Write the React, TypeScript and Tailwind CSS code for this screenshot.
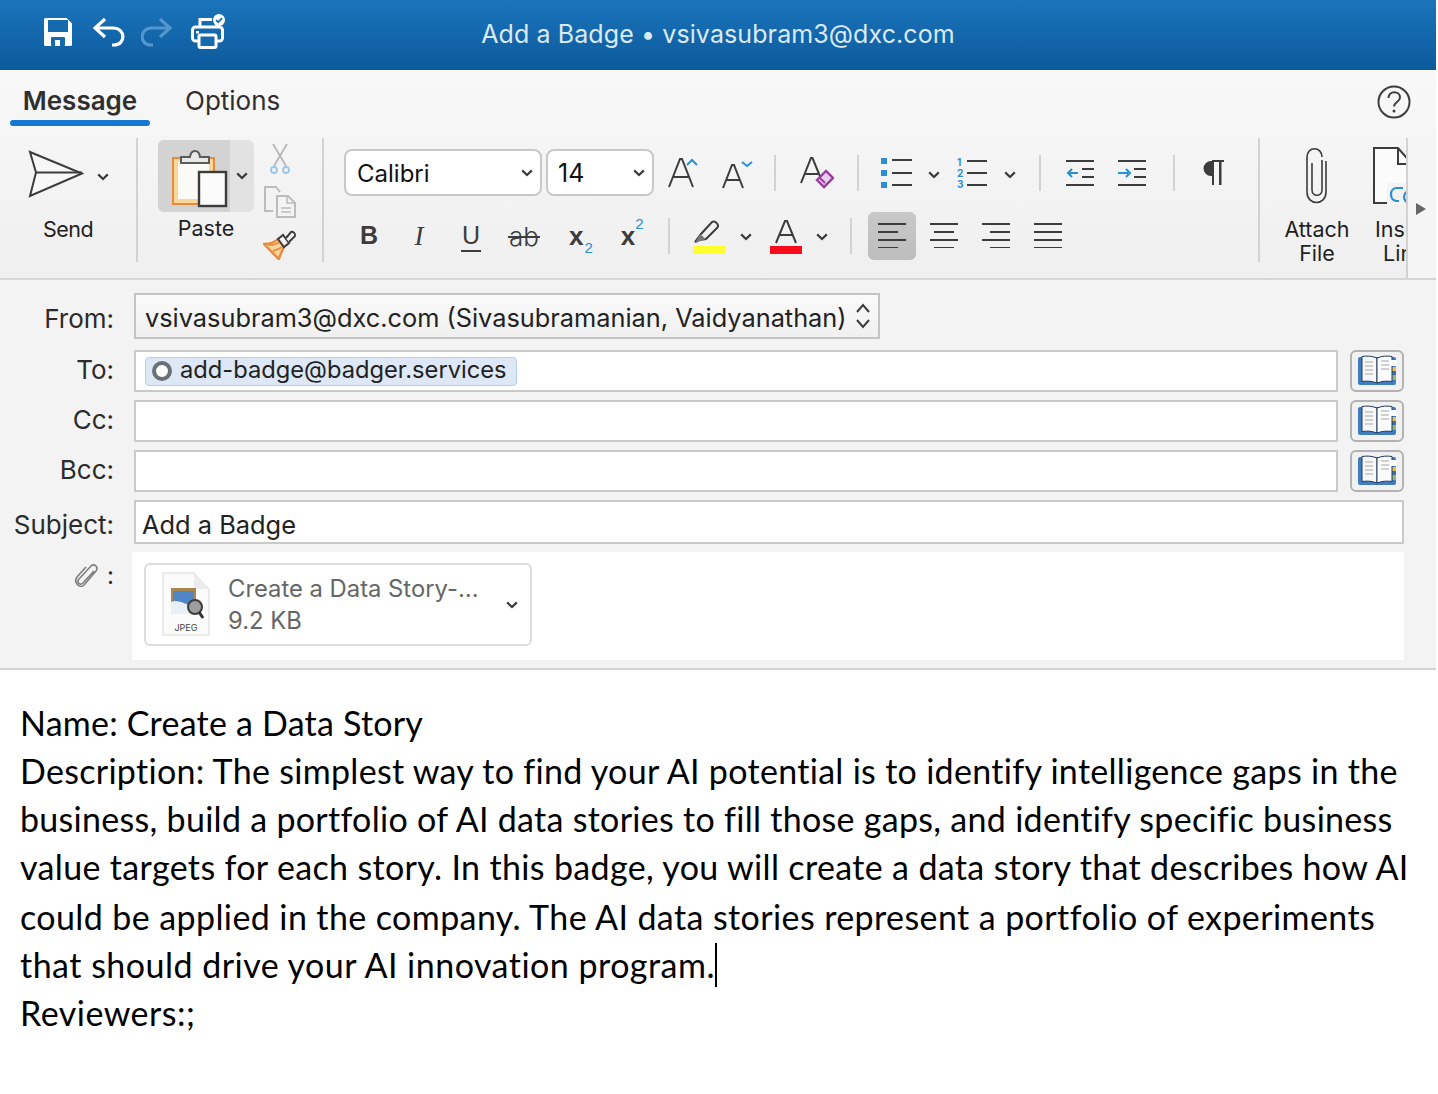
import React from 'react';

const ui = "font-['Inter','Noto_Sans',sans-serif]";

const Chevron = ({ className = '' }: { className?: string }) => (
  <svg width="12" height="8" viewBox="0 0 12 8" className={`shrink-0 ${className}`}>
    <path d="M1.2 1.4 6 6 10.8 1.4" fill="none" stroke="#3a3a3a" strokeWidth="2.2" />
  </svg>
);

const Sep = ({ className = 'h-9' }: { className?: string }) => <div className={`w-0.5 bg-[#d2d2d2] shrink-0 ${className}`} />;

const Lines = ({ rows, w = 28 }: { rows: [number, number][]; w?: number }) => (
  <svg width={w} height="26" viewBox={`0 0 ${w} 26`} className="relative -top-px">
    {rows.map(([a, b], i) => (
      <rect key={i} x={a} y={1 + i * 8} width={b - a} height="2" fill="#3c3c3c" />
    ))}
  </svg>
);

const BookIcon = () => (
  <svg width="40" height="32" viewBox="0 0 40 32">
    <rect x="1" y="2" width="38" height="28" rx="2" fill="#3f7cc0" />
    <rect x="34" y="12" width="5" height="4" fill="#e9bf4e" />
    <rect x="34" y="16" width="5" height="4" fill="#3b6ea8" />
    <rect x="34" y="20" width="5" height="5" fill="#8fb577" />
    <path d="M5 1.5c5-.8 10-.5 15 1.5v25c-5-2-10-2.2-15-1.5Z" fill="#f6f6f6" stroke="#1f3b5e" />
    <path d="M35 1.5c-5-.8-10-.5-15 1.5v25c5-2 10-2.2 15-1.5Z" fill="#fbfbfb" stroke="#1f3b5e" />
    <rect x="34" y="5" width="5.5" height="6" fill="#fff" />
    <path d="M8 7h8M8 11h8M8 15h8M8 19h8M24 6h8M24 10h8M24 14h8" stroke="#c2c2c2" strokeWidth="1.6" />
  </svg>
);

const BookButton = () => (
  <button className="w-[54px] h-[42px] rounded-md border-2 border-[#b2b2b2] bg-[#f1f1f1] flex items-center justify-center shrink-0">
    <BookIcon />
  </button>
);

const TitleBar = () => (
  <div className="h-[70px] bg-gradient-to-b from-[#1b74bb] to-[#0c5a9c] flex items-center relative">
    <div className="flex items-center pl-11 h-full pb-[6px]">
      <svg width="28" height="28" viewBox="0 0 28 28">
        <path d="M1.5 0h21L28 5.5v21a1.5 1.5 0 0 1-1.5 1.5h-25A1.5 1.5 0 0 1 0 26.5v-25A1.500 1.500 0 0 1 1.500 0Z" fill="#fff" />
        <rect x="4" y="2" width="20" height="12" fill="#1569ad" />
        <rect x="7" y="19" width="14" height="9" rx="1" fill="#1569ad" />
        <rect x="11" y="22" width="5" height="6" fill="#fff" />
      </svg>
      <svg width="32" height="30" viewBox="0 0 32 30" className="ml-[21px]">
        <path d="M12 2 2 11l10 9M3 11h17c13 0 13 17 1 17h-2" fill="none" stroke="#fff" strokeWidth="3.2" />
      </svg>
      <svg width="32" height="30" viewBox="0 0 32 30" className="ml-[16px] opacity-90">
        <path d="M19 2l10 9-10 9M28 11H11C-2 11-2 28 10 28h2" fill="none" stroke="#5a9ccf" strokeWidth="3.2" />
      </svg>
      <svg width="36" height="36" viewBox="0 0 36 36" className="ml-[18px] mb-[1px]">
        <path d="M9 14V5.500h12M26 10v4" fill="none" stroke="#fff" strokeWidth="3" />
        <rect x="1.500" y="13" width="30" height="14" rx="3" fill="none" stroke="#fff" strokeWidth="3" />
        <rect x="8" y="21" width="17" height="12.500" rx="1.500" fill="#1569ad" stroke="#fff" strokeWidth="3" />
        <rect x="5" y="17" width="3" height="2.500" fill="#fff" />
        <circle cx="28" cy="6" r="6" fill="#fff" />
        <path d="M25 6l2.200 2.200L31 4.200" fill="none" stroke="#1569ad" strokeWidth="1.700" />
      </svg>
    </div>
    <div className="absolute inset-0 flex items-center justify-center pb-[1px] text-[#dbe9f5] text-[25px] tracking-[0.1px]">
      Add a Badge • vsivasubram3@dxc.com
    </div>
  </div>
);

const Tabs = () => (
  <div className="h-[56px] flex items-start justify-between pr-[25px] text-[#2f2f2f]">
    <div className="flex">
      <div className="ml-[10px] w-[140px] h-[56px] flex flex-col items-center">
        <span className="mt-[14px] h-[34px] text-[26px] leading-[34px] font-semibold">Message</span>
        <div className="mt-[2px] w-full h-[6px] rounded-full bg-[#1477d2]" />
      </div>
      <span className="ml-[35px] mt-[14px] text-[26px] leading-[34px] font-normal">Options</span>
    </div>
    <svg width="34" height="34" viewBox="0 0 34 34" className="mt-[15px]">
      <circle cx="17" cy="17" r="15.500" fill="none" stroke="#3d3d3d" strokeWidth="2" />
      <path d="M11.500 13c.3-8 11.500-7.500 11.500-.5 0 4.500-6 4.500-6 9" fill="none" stroke="#3d3d3d" strokeWidth="2" />
      <circle cx="17" cy="26" r="1.500" fill="#3d3d3d" />
    </svg>
  </div>
);

const SendGroup = () => (
  <div className="w-[136px] shrink-0 flex flex-col">
    <div className="h-[56px] flex items-start pl-[28px] pt-[24px] mt-0">
      <svg width="56" height="48" viewBox="0 0 56 48">
        <path d="M2 2 54 23.500 2 46l6-23.500Z" fill="#f7f7f7" stroke="#3c3c3c" strokeWidth="2" />
        <path d="M8 22.500h46" stroke="#3c3c3c" strokeWidth="2" />
      </svg>
      <Chevron className="ml-[13px] mt-[23px]" />
    </div>
    <span className="mt-[33px] pl-[43px] text-[21.500px] leading-[28px] tracking-[-0.5px] text-[#1f1f1f]">Send</span>
  </div>
);

const PasteGroup = () => (
  <div className="w-[184px] shrink-0 flex pl-[20px] pt-[14px]">
    <div className="flex flex-col items-center w-[96px]">
      <div className="w-[96px] h-[72px] rounded-md flex bg-[#e2e2e2] overflow-hidden">
        <div className="w-[72px] bg-[#d3d3d3] flex items-start pl-[14px] pt-[8px]">
          <svg width="56" height="60" viewBox="0 0 56 60">
            <rect x="1" y="10" width="41" height="46" fill="#f9d899" stroke="#ea8a3c" strokeWidth="2" />
            <rect x="6" y="14" width="31" height="37" fill="#fbfaf6" />
            <path d="M9 15V9h9c1-8 9-8 10 0h9v6Z" fill="#e8e8e8" stroke="#5b5b5b" strokeWidth="2" />
            <rect x="27" y="24" width="27" height="34" fill="#fbfbfb" stroke="#3c3c3c" strokeWidth="2.400" />
          </svg>
        </div>
        <div className="flex-1 flex items-center justify-center">
          <Chevron />
        </div>
      </div>
      <span className="mt-[2px] text-[21.500px] leading-[28px] text-[#1f1f1f]">Paste</span>
    </div>
    <div className="flex flex-col items-center ml-[7px] w-[38px] mt-[3px]">
      <svg width="24" height="32" viewBox="0 0 24 32">
        <path d="M5 1l13 22M19 1 6 23" stroke="#b8b8b8" strokeWidth="1.800" fill="none" />
        <circle cx="6" cy="27" r="3" fill="none" stroke="#9cc6e6" strokeWidth="1.800" />
        <circle cx="18" cy="27" r="3" fill="none" stroke="#9cc6e6" strokeWidth="1.800" />
      </svg>
      <svg width="34" height="34" viewBox="0 0 34 34" className="mt-[10px]">
        <path d="M10 26H2V2h11l4 5" fill="none" stroke="#bcbcbc" strokeWidth="2" />
        <path d="M14 11h11l7 7v14H14Z" fill="#f4f4f4" stroke="#bcbcbc" strokeWidth="2" />
        <path d="M24 11v7h8M18 23h10M18 27h10" fill="none" stroke="#bcbcbc" strokeWidth="1.600" />
      </svg>
      <svg width="34" height="30" viewBox="0 0 34 30" className="mt-[11px]">
        <path d="M1 14c6 0 11-2 14-5l6 8c-2 4-4 8-5 12C12 26 6 19 1 14Z" fill="#f9d49a" stroke="#ea8a3c" strokeWidth="2.400" />
        <path d="M5 15c5 0 9-1 12-3M10 21c3-1 6-2 9-4" fill="none" stroke="#ea8a3c" strokeWidth="1.600" />
        <path d="M15 9l5-4 6 8-5 4Z" fill="#f6f6f6" stroke="#3c3c3c" strokeWidth="2" />
        <path d="M23 8l5-6c2-1 5 2 4 4l-6 6" fill="#f6f6f6" stroke="#3c3c3c" strokeWidth="2" />
      </svg>
    </div>
  </div>
);

const Selects = () => (
  <div className="flex items-center gap-[4px] -mt-[1px]">
    <div className="w-[198px] h-[47px] rounded-lg border-2 border-[#c8c8c8] bg-white flex items-center justify-between pl-[11px] pr-[7px] text-[24px] text-[#111]">
      <span className="pt-[2px]">Calibri</span>
      <Chevron />
    </div>
    <div className="w-[108px] h-[47px] rounded-lg border-2 border-[#c8c8c8] bg-white flex items-center justify-between pl-[10px] pr-[7px] text-[25px] text-[#111]">
      <span className="pt-[2px]">14</span>
      <Chevron />
    </div>
  </div>
);

const FormatRowOne = () => (
  <div className="h-[48px] flex items-center mt-[23px]">
    <div className="ml-[20px]"><Selects /></div>
    <svg width="36" height="34" viewBox="0 0 36 34" className="ml-[13px]">
      <path d="M2 31 13 3h2l11 28M6 21h17" fill="none" stroke="#3c3c3c" strokeWidth="2" />
      <path d="M22 8l5-5 5 5" fill="none" stroke="#2a8fd3" strokeWidth="2" transform="translate(-2 1)" />
    </svg>
    <svg width="32" height="28" viewBox="0 0 32 28" className="ml-[19px] mt-[3px]">
      <path d="M1 27 10 4h2l9 23M4 19h14" fill="none" stroke="#3c3c3c" strokeWidth="2" />
      <path d="M20 1l5 4 5-4" fill="none" stroke="#2a8fd3" strokeWidth="2" />
    </svg>
    <Sep className="h-9 ml-[20px]" />
    <svg width="34" height="34" viewBox="0 0 34 34" className="ml-[24px]">
      <path d="M1 27 11 2h1.500l9 22M4 18h14" fill="none" stroke="#3c3c3c" strokeWidth="2" />
      <path d="M17 24l9-9 7 7-9 9Z" fill="#e9cfe9" stroke="#9b3aa3" strokeWidth="2.400" />
      <path d="M20 22l5 5" stroke="#9b3aa3" strokeWidth="2" />
    </svg>
    <Sep className="h-9 ml-[23px]" />
    <svg width="32" height="30" viewBox="0 0 32 30" className="ml-[22px]">
      <rect x="0" y="0" width="6" height="6" fill="#2a8fd3" />
      <rect x="0" y="12" width="6" height="6" fill="#2a8fd3" />
      <rect x="0" y="24" width="6" height="6" fill="#2a8fd3" />
      <path d="M11 2h20M11 15h20M11 27h20" stroke="#3c3c3c" strokeWidth="2" />
    </svg>
    <Chevron className="ml-[15px] mt-[3px]" />
    <svg width="32" height="32" viewBox="0 0 32 32" className="ml-[17px]">
      <text x="0" y="9" fontSize="10" fontWeight="700" fill="#2a8fd3" fontFamily="Inter">1</text>
      <text x="0" y="20" fontSize="10" fontWeight="700" fill="#2a8fd3" fontFamily="Inter">2</text>
      <text x="0" y="31" fontSize="10" fontWeight="700" fill="#2a8fd3" fontFamily="Inter">3</text>
      <path d="M10 4h20M10 16h20M10 28h20" stroke="#3c3c3c" strokeWidth="2" />
    </svg>
    <Chevron className="ml-[15px] mt-[3px]" />
    <Sep className="h-9 ml-[23px]" />
    <svg width="28" height="26" viewBox="0 0 28 26" className="ml-[25px]">
      <path d="M0 1h28M16 9h12M16 17h12M0 25h28" stroke="#3c3c3c" strokeWidth="2" />
      <path d="M12 13H2M6 9l-4 4 4 4" fill="none" stroke="#2a8fd3" strokeWidth="2" />
    </svg>
    <svg width="28" height="26" viewBox="0 0 28 26" className="ml-[24px]">
      <path d="M0 1h28M16 9h12M16 17h12M0 25h28" stroke="#3c3c3c" strokeWidth="2" />
      <path d="M0 13h10M8 9l4 4-4 4" fill="none" stroke="#2a8fd3" strokeWidth="2" />
    </svg>
    <Sep className="h-9 ml-[27px]" />
    <svg width="22" height="28" viewBox="0 0 22 28" className="ml-[28px]">
      <path d="M11 2H8a7 7 0 0 0 0 15h3Z" fill="#3c3c3c" />
      <path d="M9 1h2v25H9ZM16 1h2.500v25H16ZM9 1h12v2H9Z" fill="#3c3c3c" />
    </svg>
  </div>
);

const FormatRowTwo = () => (
  <div className="h-[48px] flex items-center mt-[15px] text-[#3c3c3c]">
    <span className="ml-[36px] w-[18px] text-center text-[25px] font-bold font-['Liberation_Sans',sans-serif]">B</span>
    <span className="ml-[34px] w-[14px] text-center text-[27px] italic font-['Liberation_Serif',serif]">I</span>
    <span className="ml-[35px] w-[20px] text-center text-[25px] leading-[30px] border-b-2 border-[#3c3c3c] font-['Liberation_Sans',sans-serif] h-[32px]">U</span>
    <span className="ml-[27px] w-[32px] relative text-center text-[26px] font-light">
      ab
      <span className="absolute left-0 right-0 top-1/2 h-[2px] bg-[#3c3c3c]" />
    </span>
    <span className="ml-[29px] text-[26px] font-bold font-['Liberation_Sans',sans-serif]">
      x<sub className="text-[15px] font-medium text-[#2a8fd3] align-[-5px] ml-[1px]">2</sub>
    </span>
    <span className="ml-[28px] text-[26px] font-bold font-['Liberation_Sans',sans-serif]">
      x<sup className="text-[15px] font-medium text-[#2a8fd3] align-[8px]">2</sup>
    </span>
    <Sep className="h-9 ml-[24px]" />
    <svg width="32" height="36" viewBox="0 0 32 36" className="ml-[23px] mt-[4px]">
      <path d="M2 22l6-8L19 2c3-2 8 3 5 6L13 19l-7 1Z" fill="none" stroke="#3c3c3c" strokeWidth="2" />
      <path d="M2 23l5-9 6 5Z" fill="#777" />
      <rect x="0" y="26" width="32" height="8" fill="#ffff2e" />
    </svg>
    <Chevron className="ml-[15px] mt-[2px]" />
    <svg width="32" height="36" viewBox="0 0 32 36" className="ml-[18px] mt-[4px]">
      <path d="M6 23 15 1h2l9 22M10 15h12" fill="none" stroke="#3c3c3c" strokeWidth="2" />
      <rect x="0" y="26" width="32" height="8" fill="#fb0a1b" />
    </svg>
    <Chevron className="ml-[14px] mt-[2px]" />
    <Sep className="h-9 ml-[22px]" />
    <div className="ml-[16px] w-[48px] h-[48px] rounded-md bg-gradient-to-b from-[#c8c8c8] to-[#bdbdbd] flex items-center justify-center">
      <Lines rows={[[0, 28], [0, 20], [0, 28], [0, 20]]} />
    </div>
    <div className="ml-[14px]"><Lines rows={[[0, 28], [4, 24], [0, 28], [4, 24]]} /></div>
    <div className="ml-[24px]"><Lines rows={[[0, 28], [8, 28], [0, 28], [8, 28]]} /></div>
    <div className="ml-[24px]"><Lines rows={[[0, 28], [0, 28], [0, 28], [0, 28]]} /></div>
  </div>
);

const InsertGroups = () => (
  <div className="flex w-[146px] overflow-hidden shrink-0">
    <div className="w-[114px] shrink-0 flex flex-col items-center">
      <svg width="22" height="58" viewBox="0 0 22 58" className="mt-[21px]">
        <path d="M6 16v27c0 7 10 7 10 0V13" fill="none" stroke="#3c3c3c" strokeWidth="1.600" />
        <path d="M20 14v31c0 14-19 14-19 0V10C1-1 16-1 16 10" fill="none" stroke="#3c3c3c" strokeWidth="1.600" />
      </svg>
      <span className="mt-[12px] text-[21.500px] leading-[24px] text-center text-[#1f1f1f]">Attach<br />File</span>
    </div>
    <div className="w-[60px] shrink-0 flex flex-col items-center">
      <svg width="60" height="58" viewBox="0 0 60 58" className="mt-[21px] -ml-[3px]">
        <path d="M1 1h24l14 16v39H1Z" fill="#fbfbfb" stroke="#3c3c3c" strokeWidth="2" />
        <path d="M25 1v16h14" fill="none" stroke="#3c3c3c" strokeWidth="2" />
        <rect x="14" y="36" width="30" height="22" fill="#f3f3f3" />
        <path d="M30 41h-6c-8 0-8 13 0 13h2" fill="none" stroke="#2a8fd3" strokeWidth="2.200" />
        <circle cx="37" cy="50" r="6" fill="none" stroke="#2a8fd3" strokeWidth="2.200" />
      </svg>
      <span className="mt-[12px] text-[21.500px] leading-[24px] text-center text-[#1f1f1f]">Insert<br />Link</span>
    </div>
  </div>
);

const Ribbon = () => (
  <div className="h-[154px] flex items-stretch border-b-2 border-[#d6d6d6]">
    <div className="flex shrink-0">
      <SendGroup />
      <Sep className="h-[124px] mt-3" />
      <PasteGroup />
      <Sep className="h-[124px] mt-3" />
      <div className="w-[934px] shrink-0 flex flex-col">
        <FormatRowOne />
        <FormatRowTwo />
      </div>
      <Sep className="h-[124px] mt-3" />
      <InsertGroups />
    </div>
    <div className="flex-1 mt-3 border-l-2 border-[#d2d2d2] bg-[#f5f5f5] flex items-start pl-[8px] pt-[65px]">
      <div className="w-0 h-0 border-y-[6px] border-y-transparent border-l-[10px] border-l-[#666]" />
    </div>
  </div>
);

const FieldLabel = ({ children, className = '' }: { children: React.ReactNode; className?: string }) => (
  <div className={`w-[114px] shrink-0 text-right text-[26px] text-[#2b2b2b] ${className}`}>{children}</div>
);

const Recipient = ({ label, children }: { label: string; children?: React.ReactNode }) => (
  <div className="h-[42px] flex items-center">
    <FieldLabel className="pb-[4px]">{label}</FieldLabel>
    <div className="ml-[20px] flex-1 h-full border-2 border-[#c9c9c9] bg-white flex items-center pl-[9px]">{children}</div>
    <div className="ml-[12px]"><BookButton /></div>
  </div>
);

const Header = () => (
  <div className="h-[390px] pr-[32px] border-b-2 border-[#d2d2d2] flex flex-col">
    <div className="mt-[13px] h-[46px] flex items-center">
      <FieldLabel className="pt-[4px]">From:</FieldLabel>
      <div className="ml-[20px] w-[746px] h-full border-2 border-[#c4c4c4] bg-gradient-to-b from-[#fafafa] to-[#f0f0f0] flex items-center justify-between pl-[9px] pr-[8px] text-[25.330px] text-[#222] whitespace-nowrap">
        <span className="pt-[3px]">vsivasubram3@dxc.com (Sivasubramanian, Vaidyanathan)</span>
        <svg width="14" height="26" viewBox="0 0 14 26">
          <path d="M1 9l6-7 6 7M1 17l6 7 6-7" fill="none" stroke="#3c3c3c" strokeWidth="2" />
        </svg>
      </div>
    </div>
    <div className="mt-[11px]">
      <Recipient label="To:">
        <div className="h-[29px] w-[372px] rounded border border-[#b4cdf0] bg-[#dde7f6] flex items-center pl-[6px] text-[23.700px] text-[#222] whitespace-nowrap">
          <div className="w-5 h-5 rounded-full border-[4px] border-[#6a7078] bg-white shrink-0" />
          <span className="ml-[8px] leading-[26px] pb-[2px]">add-badge@badger.services</span>
        </div>
      </Recipient>
    </div>
    <div className="mt-2"><Recipient label="Cc:" /></div>
    <div className="mt-2"><Recipient label="Bcc:" /></div>
    <div className="mt-2 h-[44px] flex items-center">
      <FieldLabel className="pt-[4px]">Subject:</FieldLabel>
      <div className="ml-[20px] flex-1 h-full border-2 border-[#c9c9c9] bg-white flex items-center pl-[6px] text-[25.400px] text-[#222]">
        <span className="pt-[6px]">Add a Badge</span>
      </div>
    </div>
    <div className="mt-2 h-[108px] flex items-start">
      <div className="w-[114px] shrink-0 flex justify-end items-center pt-[6px] text-[24px] text-[#2b2b2b]">
        <svg width="26" height="26" viewBox="0 0 26 26">
          <path d="M20 8 9 20c-3 3-7-1-4-4L17 3c3-3 8 1 5 5L10 22c-4 4-11-2-7-8l9-10" fill="none" stroke="#7d7d7d" strokeWidth="1.600" />
        </svg>
        <span className="ml-[7px]">:</span>
      </div>
      <div className="ml-[18px] flex-1 h-full bg-white pl-[12px] pt-[11px]">
        <div className="w-[388px] h-[83px] rounded-md border-2 border-[#dcdcdc] bg-white flex items-center pl-[16px] pr-[12px]">
          <svg width="48" height="64" viewBox="0 0 48 64" className="shrink-0 -mt-[2px]">
            <path d="M1 1h31l15 16v46H1Z" fill="#fbfbfb" stroke="#d8d8d8" />
            <path d="M32 1v16h15" fill="#ececec" />
            <rect x="9" y="16" width="25" height="22" fill="#a9874e" />
            <rect x="11" y="19" width="21" height="18" fill="#4f86c7" />
            <path d="M9 30c8-4 16 5 25 3v9H9Z" fill="#e8eff6" />
            <circle cx="33" cy="35" r="7" fill="#9d9d9d" stroke="#3d3d3d" strokeWidth="2" />
            <path d="M37 40l4 6" stroke="#333" strokeWidth="3" />
            <text x="24" y="59" fontSize="9" textAnchor="middle" fill="#444" fontFamily="Inter">JPEG</text>
          </svg>
          <div className="ml-[18px] flex-1 flex flex-col text-[#666] whitespace-nowrap">
            <span className="text-[23.800px] leading-[31px]">Create a Data Story-…</span>
            <span className="text-[23.800px] leading-[31px] pt-px">9.2 KB</span>
          </div>
          <Chevron />
        </div>
      </div>
    </div>
  </div>
);

const Body = () => (
  <div className="flex-1 bg-white pl-[20px] pt-[29px] font-['Lato',sans-serif] text-[34px] leading-[48px] text-black whitespace-nowrap">
    <div className="tracking-[0.22px]">Name: Create a Data Story</div>
    <div className="tracking-[0.3px]">Description: The simplest way to find your AI potential is to identify intelligence gaps in the</div>
    <div className="tracking-[0.29px]">business, build a portfolio of AI data stories to fill those gaps, and identify specific business</div>
    <div className="tracking-[0.35px]">value targets for each story. In this badge, you will create a data story that describes how AI</div>
    <div className="tracking-[0.4px] mt-[2px]">could be applied in the company. The AI data stories represent a portfolio of experiments</div>
    <div className="flex items-center h-[48px] tracking-[0.48px]">
      that should drive your AI innovation program.
      <div className="w-0.5 h-[44px] bg-black" />
    </div>
    <div className="tracking-[0.48px]">Reviewers:;</div>
  </div>
);

export default function App() {
  return (
    <div className="w-[1438px] h-[1094px] overflow-hidden bg-white">
      <div className={`w-[1436px] h-full flex flex-col bg-[#f3f3f3] ${ui}`}>
        <TitleBar />
        <div className="bg-gradient-to-b from-[#f8f8f8] to-[#efefef]">
          <Tabs />
          <Ribbon />
        </div>
        <Header />
        <Body />
      </div>
    </div>
  );
}
